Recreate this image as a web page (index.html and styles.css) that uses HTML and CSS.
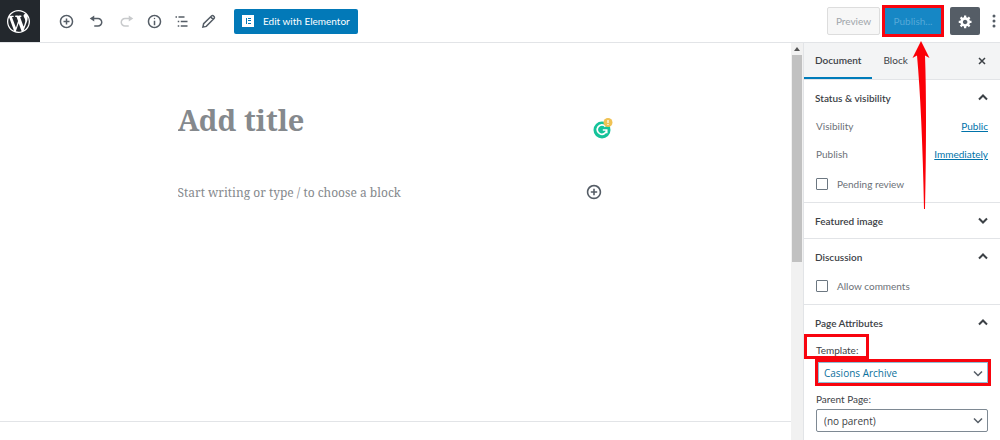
FILE: index.html
```html
<!DOCTYPE html>
<html lang="en">
<head>
    <meta charset="UTF-8">
    <meta name="viewport" content="width=device-width, initial-scale=1.0">
    <title>Add New Page</title>
    <link rel="stylesheet" href="styles.css">
</head>
<body>
    <header class="header">
        <a class="logo" href="#" aria-label="View pages">
            <svg width="23" height="23" viewBox="0 0 20 20"><path d="M20 10c0-5.51-4.49-10-10-10C4.48 0 0 4.49 0 10c0 5.52 4.48 10 10 10 5.51 0 10-4.48 10-10zM7.78 15.37L4.37 6.22c.55-.02 1.17-.08 1.17-.08.5-.06.44-1.13-.06-1.11 0 0-1.45.11-2.37.11-.18 0-.37 0-.58-.01C4.12 2.69 6.87 1.11 10 1.11c2.33 0 4.45.87 6.05 2.34-.68-.11-1.65.39-1.65 1.58 0 .74.45 1.36.9 2.1.35.61.55 1.36.55 2.46 0 1.49-1.4 5-1.4 5l-3.03-8.37c.54-.02.82-.17.82-.17.5-.05.44-1.25-.06-1.22 0 0-1.44.12-2.38.12-.87 0-2.33-.12-2.33-.12-.5-.03-.56 1.2-.06 1.22l.92.08 1.26 3.41zM17.41 10c.24-.64.74-1.87.43-4.25.7 1.29 1.05 2.71 1.05 4.25 0 3.29-1.73 6.24-4.4 7.78.97-2.59 1.94-5.2 2.92-7.78zM6.1 18.09C3.12 16.65 1.11 13.53 1.11 10c0-1.3.23-2.48.72-3.59C3.25 10.3 4.67 14.2 6.1 18.09zm4.03-6.63l2.58 6.98c-.86.29-1.76.45-2.71.45-.79 0-1.57-.11-2.29-.33.81-2.38 1.62-4.74 2.42-7.1z"/></svg>
        </a>
        <div class="tools">
            <button class="tool tool-wide" type="button" aria-label="Add block">
                <svg width="15" height="15" viewBox="0 0 20 20"><path d="M10 1c-5 0-9 4-9 9s4 9 9 9 9-4 9-9-4-9-9-9zm0 16c-3.9 0-7-3.1-7-7s3.1-7 7-7 7 3.1 7 7-3.1 7-7 7zm1-11H9v3H6v2h3v3h2v-3h3V9h-3V6z"/></svg>
            </button>
            <button class="tool tool-wide" type="button" aria-label="Undo">
                <svg width="15" height="15" viewBox="0 0 20 20"><path d="M12 5H7V2L1 6l6 4V7h5c2.2 0 4 1.8 4 4s-1.8 4-4 4H7v2h5c3.3 0 6-2.7 6-6s-2.7-6-6-6z"/></svg>
            </button>
            <button class="tool tool-wide" type="button" aria-label="Redo" disabled>
                <svg width="15" height="15" viewBox="0 0 20 20"><path d="M8 5h5V2l6 4-6 4V7H8c-2.2 0-4 1.8-4 4s1.8 4 4 4h5v2H8c-3.3 0-6-2.7-6-6s2.7-6 6-6z"/></svg>
            </button>
            <button class="tool" type="button" aria-label="Content structure">
                <svg width="15" height="15" viewBox="0 0 20 20"><path d="M9 15h2V9H9v6zm1-10c-.5 0-1 .5-1 1s.5 1 1 1 1-.5 1-1-.5-1-1-1zm0-4c-5 0-9 4-9 9s4 9 9 9 9-4 9-9-4-9-9-9zm0 16c-3.9 0-7-3.1-7-7s3.1-7 7-7 7 3.1 7 7-3.1 7-7 7z"/></svg>
            </button>
            <button class="tool" type="button" aria-label="Block navigation">
                <svg width="15" height="15" viewBox="0 0 20 20"><path d="M4 3H2v2h2V3zm10 0H6v2h8V3zM7 9H5v2h2V9zm11 0H9v2h9V9zM7 15H5v2h2v-2zm11 0H9v2h9v-2z"/></svg>
            </button>
            <button class="tool" type="button" aria-label="Edit mode">
                <svg width="15" height="15" viewBox="0 0 20 20"><path class="line" d="M2.5 17.5l1-4.5L14 2.7c.8-.8 2-.8 2.7 0l.7.7c.7.7.7 1.9 0 2.6L7 16.5zM13 4l3.2 3.2"/></svg>
            </button>
        </div>
        <button class="elementor" type="button">
            <svg width="12" height="12" viewBox="0 0 12 12"><path fill="#fff" d="M0 0h12v12H0z"/><path fill="#0279b8" d="M4 3h1v6H4zM6 3h3v1H6zM6 5h3v1H6zM6 8h3v1H6z"/></svg>
            Edit with Elementor
        </button>
        <div class="actions">
            <button class="preview" type="button" disabled>Preview</button>
            <div class="publish-mark"><button class="publish" type="button" disabled>Publish...</button></div>
            <button class="settings" type="button" aria-label="Settings">
                <svg width="15" height="15" viewBox="0 0 20 20"><path d="M18 12h-2.18c-.17.7-.44 1.35-.81 1.93l1.54 1.54-2.1 2.1-1.54-1.54c-.58.36-1.23.63-1.91.79V19H8v-2.18c-.68-.16-1.33-.43-1.91-.79l-1.54 1.54-2.12-2.12 1.54-1.54c-.36-.58-.63-1.23-.79-1.91H1V9.03h2.17c.16-.7.44-1.35.8-1.94L2.43 5.55l2.1-2.1 1.54 1.54c.58-.37 1.24-.64 1.93-.81V2h3v2.18c.68.16 1.33.43 1.91.79l1.54-1.54 2.12 2.12-1.54 1.54c.36.59.64 1.24.8 1.94H18V12zm-8.5 1.5c1.66 0 3-1.34 3-3s-1.34-3-3-3-3 1.34-3 3 1.34 3 3 3z"/></svg>
            </button>
            <button class="more" type="button" aria-label="More options">
                <svg width="4" height="16" viewBox="0 0 4 16"><circle cx="2" cy="3" r="1.5"/><circle cx="2" cy="8" r="1.5"/><circle cx="2" cy="13" r="1.5"/></svg>
            </button>
        </div>
    </header>

    <div class="layout">
        <main class="editor">
            <div class="content">
                <div class="title-row">
                    <input class="title" type="text" placeholder="Add title" aria-label="Title">
                    <svg class="grammar" width="20" height="22" viewBox="0 0 20 22">
                        <circle cx="9" cy="13" r="8.5" fill="#15c39a"/>
                        <path d="M12.5 9.6A4.7 4.7 0 1 0 13.6 13H9.8M13.7 12.8v3.4" fill="none" stroke="#fff" stroke-width="1.7"/>
                        <circle cx="15" cy="5.5" r="4.5" fill="#f0c254"/>
                        <path d="M15 3v3M15 7v1" stroke="#fff" stroke-width="1.2"/>
                    </svg>
                </div>
                <div class="block-row">
                    <input class="block" type="text" placeholder="Start writing or type / to choose a block" aria-label="Add block">
                    <button class="inserter" type="button" aria-label="Insert block">
                        <svg width="16" height="16" viewBox="0 0 20 20"><path d="M10 1c-5 0-9 4-9 9s4 9 9 9 9-4 9-9-4-9-9-9zm0 16c-3.9 0-7-3.1-7-7s3.1-7 7-7 7 3.1 7 7-3.1 7-7 7zm1-11H9v3H6v2h3v3h2v-3h3V9h-3V6z"/></svg>
                    </button>
                </div>
            </div>
            <div class="metaboxes"></div>
        </main>
        <div class="scrollbar">
            <svg width="6" height="4" viewBox="0 0 6 4"><path d="M0 4l3-4 3 4z" fill="#555"/></svg>
            <div class="thumb"></div>
        </div>
        <aside class="sidebar">
            <div class="tabs">
                <button class="tab active" type="button">Document</button>
                <button class="tab" type="button">Block</button>
                <button class="close" type="button" aria-label="Close settings">
                    <svg width="8" height="8" viewBox="0 0 8 8"><path class="line thin" d="M1 1l6 6M7 1L1 7"/></svg>
                </button>
            </div>
            <section class="panel">
                <button class="toggle" type="button">Status &amp; visibility
                    <svg width="10" height="7" viewBox="0 0 10 7"><path class="line" d="M1 5.5l4-4 4 4"/></svg>
                </button>
                <div class="rows">
                    <div class="row"><span>Visibility</span><a href="#">Public</a></div>
                    <div class="row"><span>Publish</span><a href="#">Immediately</a></div>
                </div>
                <label class="check check-tall"><input type="checkbox">Pending review</label>
            </section>
            <section class="panel">
                <button class="toggle" type="button">Featured image
                    <svg width="10" height="7" viewBox="0 0 10 7"><path class="line" d="M1 1.5l4 4 4-4"/></svg>
                </button>
            </section>
            <section class="panel">
                <button class="toggle" type="button">Discussion
                    <svg width="10" height="7" viewBox="0 0 10 7"><path class="line" d="M1 5.5l4-4 4 4"/></svg>
                </button>
                <label class="check"><input type="checkbox">Allow comments</label>
            </section>
            <section class="panel">
                <button class="toggle" type="button">Page Attributes
                    <svg width="10" height="7" viewBox="0 0 10 7"><path class="line" d="M1 5.5l4-4 4 4"/></svg>
                </button>
                <label class="template-label" for="template">Template:</label>
                <div class="field marked">
                    <select id="template"><option>Casions Archive</option></select>
                    <svg width="10" height="7" viewBox="0 0 10 7"><path class="line thin" d="M1 1.5l4 4 4-4"/></svg>
                </div>
                <label class="parent-label" for="parent">Parent Page:</label>
                <div class="field">
                    <select id="parent"><option>(no parent)</option></select>
                    <svg width="10" height="7" viewBox="0 0 10 7"><path class="line thin" d="M1 1.5l4 4 4-4"/></svg>
                </div>
            </section>
        </aside>
    </div>

    <svg class="arrow" width="18" height="168" viewBox="0 0 18 168"><path d="M9 0L17.5 17 13 14.5Q15 70 13 168h-1Q10 70 5 14.500L.5 17z" fill="#fb0007"/></svg>
</body>
</html>
```

FILE: styles.css
```css
* {
    box-sizing: border-box;
}
body {
    margin: 0;
    height: 100vh;
    display: flex;
    flex-direction: column;
    overflow: hidden;
    background: #fff;
    color: #3c4146;
    font-family: Lato, "Open Sans", sans-serif;
    font-size: 10px;
}
button, input, select {
    font: inherit;
    color: inherit;
    margin: 0;
}
button {
    display: flex;
    align-items: center;
    justify-content: center;
    padding: 0;
    border: 0;
    background: none;
}
svg {
    fill: currentColor;
    flex-shrink: 0;
}
.line {
    fill: none;
    stroke: currentColor;
    stroke-width: 2;
}
.thin {
    stroke-width: 1.5;
}

/* top bar */
.header {
    display: flex;
    align-items: center;
    flex-shrink: 0;
    height: 43px;
    border-bottom: 1px solid #e2e4e7;
}
.logo {
    display: flex;
    align-items: center;
    justify-content: center;
    width: 40px;
    height: 42px;
    padding-right: 3px;
    background: #23282d;
    color: #fff;
}
.tools {
    display: flex;
    margin-left: 11px;
    color: #555d66;
}
.tool {
    width: 27px;
    height: 30px;
}
.tool-wide {
    width: 30px;
}
.tool:disabled {
    color: #c8cacc;
}
.elementor {
    gap: 9px;
    height: 25px;
    margin-left: 12px;
    padding: 0 8px;
    border-radius: 2px;
    background: #0279b8;
    color: #fff;
}
.actions {
    display: flex;
    align-items: center;
    margin-left: auto;
    padding-right: 4px;
}
.preview {
    width: 53px;
    height: 28px;
    border: 1px solid #ddd;
    border-radius: 2px;
    background: #f7f7f7;
    color: #a0a5aa;
}
.publish-mark {
    margin: 0 6px 0 2px;
    border: 3px solid #f8040e;
}
.publish {
    width: 56px;
    height: 26px;
    background: #1687c5;
    color: #55a9d8;
}
.settings {
    width: 30px;
    height: 28px;
    border-radius: 2px;
    background: #555d66;
    color: #fff;
}
.more {
    width: 4px;
    margin-left: 12px;
    color: #555d66;
}

/* editor */
.layout {
    display: flex;
    flex: 1;
    min-height: 0;
}
.editor {
    display: flex;
    flex: 1;
    flex-direction: column;
    min-width: 0;
}
.content {
    flex: 1;
    width: 100%;
    max-width: 436px;
    margin: 0 auto;
    padding-top: 52px;
}
.title-row, .block-row {
    display: flex;
    align-items: center;
    justify-content: space-between;
}
.title-row {
    padding-right: 1px;
}
.title, .block {
    flex: 1;
    min-width: 0;
    padding: 0;
    border: 0;
    outline: 0;
    font-family: "Noto Serif", "DejaVu Serif", serif;
}
.title {
    height: 48px;
    font-size: 29px;
    font-weight: bold;
}
.block {
    height: 24px;
    font-size: 12px;
}
.title::placeholder, .block::placeholder {
    color: #85898d;
    opacity: 1;
}
.grammar {
    margin-top: 18px;
}
.block-row {
    margin-top: 37px;
    padding-right: 12px;
}
.inserter {
    color: #555d66;
}
.metaboxes {
    height: 19px;
    border-top: 1px solid #e2e4e7;
}
.scrollbar {
    display: flex;
    flex-direction: column;
    align-items: center;
    gap: 4px;
    width: 12px;
    padding: 4px 1px;
    background: #f1f1f1;
}
.thumb {
    width: 100%;
    height: 207px;
    background: #c1c1c1;
}

/* settings sidebar */
.sidebar {
    width: 197px;
    border-left: 1px solid #e2e4e7;
    overflow: hidden;
}
.tabs {
    display: flex;
    height: 37px;
    padding-right: 14px;
    border-bottom: 1px solid #e2e4e7;
    background: #f3f4f5;
}
.tab {
    padding: 0 11px;
    border-bottom: 2px solid transparent;
}
.tab.active {
    border-color: #007cba;
    font-weight: 600;
}
.close {
    margin-left: auto;
}
.panel {
    padding: 0 12px 0 11px;
    border-bottom: 1px solid #e2e4e7;
}
.panel:last-child {
    padding-bottom: 12px;
}
.toggle {
    justify-content: space-between;
    width: 100%;
    height: 35px;
    font-weight: 600;
}
.rows {
    margin-top: -3px;
    padding-left: 1px;
}
.row {
    display: flex;
    align-items: center;
    justify-content: space-between;
    height: 28px;
    color: #6c7177;
}
.row a {
    color: #0073aa;
}
.check {
    display: flex;
    align-items: center;
    gap: 9px;
    height: 30px;
    padding-bottom: 6px;
    color: #6c7177;
}
.check-tall {
    height: 34px;
    padding-bottom: 2px;
}
.check input {
    appearance: none;
    width: 12px;
    height: 12px;
    margin-left: 1px;
    border: 1px solid #6c7781;
    border-radius: 1px;
}
.template-label {
    display: block;
    width: 65px;
    height: 25px;
    margin: -6px 0 0 -11px;
    padding: 6px 0 0 9px;
    border: 3px solid #f8040e;
    line-height: 14px;
}
.field {
    position: relative;
    margin-left: 1px;
}
.field svg {
    position: absolute;
    right: 5px;
    top: 8px;
    pointer-events: none;
    color: #555d66;
}
.field select {
    display: block;
    appearance: none;
    width: 100%;
    height: 23px;
    padding: 0 7px;
    border: 1px solid #7e8993;
    border-radius: 2px;
    background: #fff;
    font-family: "Open Sans", sans-serif;
}
.marked {
    margin: 0 -3px 0 0;
    border: 3px solid #f8040e;
}
.marked select {
    height: 21px;
    padding: 0 5px;
    border-color: #8fbdd6;
    border-radius: 0;
    color: #0b6f9c;
}
.parent-label {
    display: block;
    padding: 6px 1px 3px;
    line-height: 14px;
}

/* pointer to the publish button */
.arrow {
    position: absolute;
    top: 41px;
    right: 70px;
}
```
